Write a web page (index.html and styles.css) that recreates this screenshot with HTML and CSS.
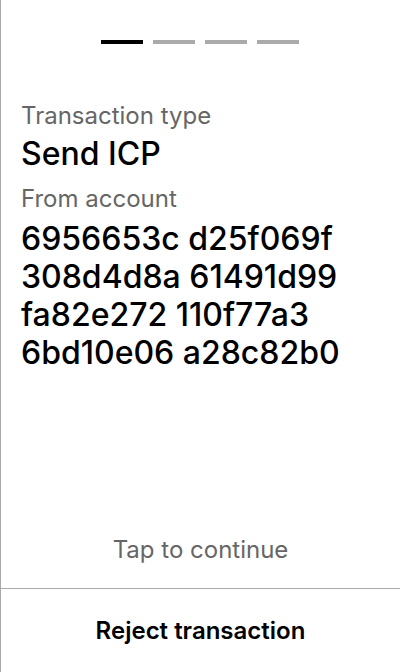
FILE: index.html
```html
<!DOCTYPE html>
<html>
<head>
<meta charset="utf-8">
<link rel="stylesheet" href="styles.css">
</head>
<body>
<div class="screen">
  <div class="progress">
    <span class="bar active"></span>
    <span class="bar"></span>
    <span class="bar"></span>
    <span class="bar"></span>
  </div>
  <div class="content">
    <div class="label">Transaction type</div>
    <div class="value">Send ICP</div>
    <div class="label label-2">From account</div>
    <div class="value account">6956653c d25f069f<br>308d4d8a 61491d99<br>fa82e272 110f77a3<br>6bd10e06 a28c82b0</div>
  </div>
  <div class="tap">Tap to continue</div>
  <div class="reject">Reject transaction</div>
</div>
</body>
</html>
```

FILE: styles.css
```css
html, body {
  margin: 0;
  padding: 0;
  background: #fff;
}
body {
  font-family: Inter, "Noto Sans", sans-serif;
  color: #000;
}
.screen {
  box-sizing: border-box;
  width: 400px;
  height: 672px;
  border-left: 1px solid #aaaaaa;
  display: flex;
  flex-direction: column;
}
.progress {
  display: flex;
  justify-content: center;
  gap: 10px;
  padding-top: 40px;
  padding-right: 1px;
}
.bar {
  width: 42px;
  height: 4px;
  background: #aaaaaa;
}
.bar.active {
  background: #000;
}
.content {
  padding: 56px 20px 0 20px;
  flex: 1;
}
.label {
  font-size: 24px;
  line-height: 32px;
  color: #666666;
}
.label-2 {
  margin-top: 10px;
}
.value {
  font-size: 32px;
  line-height: 38px;
  font-weight: 500;
  margin-top: 3px;
}
.account {
  margin-top: 5px;
}
.tap {
  text-align: center;
  font-size: 24px;
  line-height: 28px;
  color: #666666;
  padding-bottom: 24px;
}
.reject {
  border-top: 1px solid #aaaaaa;
  height: 83px;
  display: flex;
  align-items: center;
  justify-content: center;
  font-size: 24px;
  font-weight: 600;
}
```
